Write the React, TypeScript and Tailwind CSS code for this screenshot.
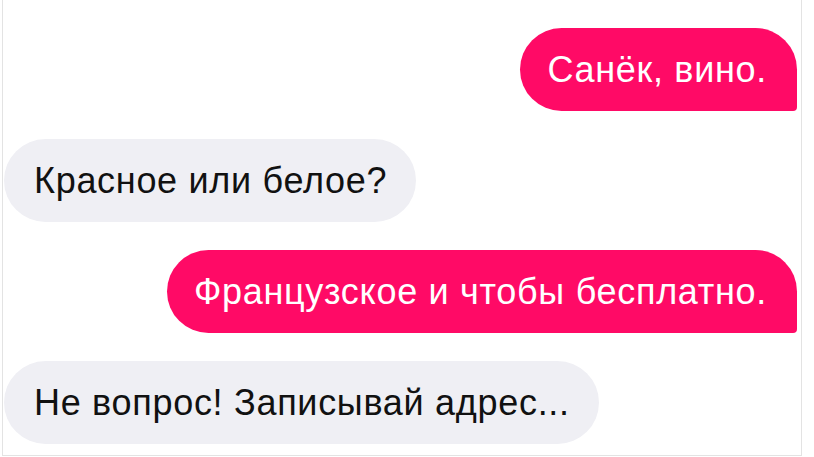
const messages = [
  { text: "Санёк, вино.", mine: true },
  { text: "Красное или белое?", mine: false },
  { text: "Французское и чтобы бесплатно.", mine: true },
  { text: "Не вопрос! Записывай адрес...", mine: false },
];

const Bubble = ({ text, mine }: { text: string; mine: boolean }) => {
  return (
    <div className={`flex ${mine ? "justify-end pr-[4px]" : "justify-start pl-[1px]"}`}>
      <div
        className={`h-[83px] flex items-center text-[36px] leading-none tracking-[0.7px] ${
          mine
            ? "bg-[#ff0a66] text-white rounded-[42px] rounded-br-[4px] pl-[27px] pr-[30px]"
            : "bg-[#efeff4] text-[#111] rounded-[42px] pl-[30px] pr-[29px]"
        }`}
      >
        {text}
      </div>
    </div>
  );
};

export default function App() {
  return (
    <div className="w-[814px] h-[457px] bg-white" style={{ fontFamily: '"Liberation Sans", Arial, sans-serif' }}>
      <div className="ml-[2px] w-[800px] h-[456px] border border-t-0 border-[#e3e3e3] flex flex-col gap-[28px] pt-[28px]">
        {messages.map((m, i) => (
          <Bubble key={i} text={m.text} mine={m.mine} />
        ))}
      </div>
    </div>
  );
}
